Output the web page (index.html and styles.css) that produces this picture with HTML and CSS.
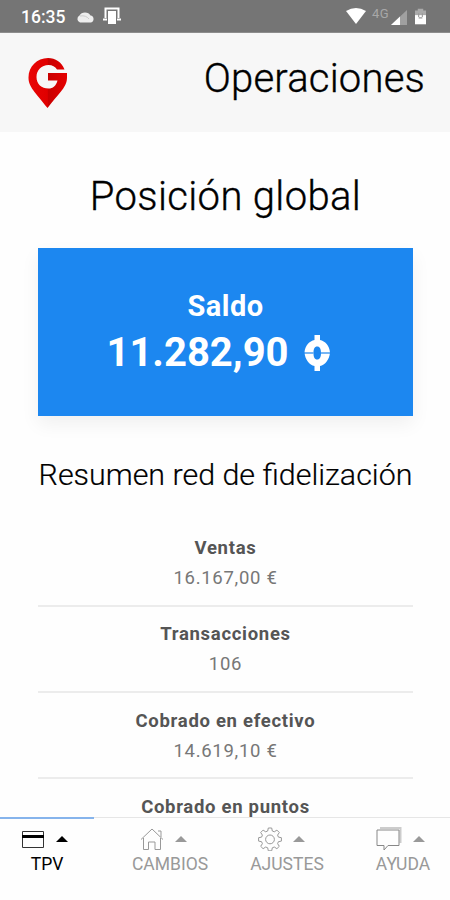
FILE: index.html
```html
<!DOCTYPE html>
<html lang="es">
<head>
<meta charset="utf-8">
<title>Operaciones</title>
<link rel="stylesheet" href="styles.css">
</head>
<body>
<div class="app">
  <div class="status">
    <span class="clock">16:35</span>
    <svg class="cloud" width="19" height="12" viewBox="0 0 19 12"><path d="M4 11.500A3.800 3.800 0 0 1 3.500 4.500 6 5 0 0 1 14.500 4.500 3.600 3.600 0 0 1 15 11.500Z" fill="#eee"/><path d="M4 5q6-1 9 3" stroke="#ccc" fill="none"/></svg>
    <svg class="cast" width="20" height="18" viewBox="0 0 20 18"><path d="M3.500 11V1.500h13V11M1 12.500h4M15 12.500h4" fill="none" stroke="#fff" stroke-width="2"/><path d="M6 4h8v13H6z" fill="#fff"/></svg>
    <svg class="wifi" width="20" height="16" viewBox="0 0 20 16"><path d="M0 3Q10-3 20 3L10 16Z" fill="#fff"/></svg>
    <span class="net">4G</span>
    <svg class="signal" width="16" height="15" viewBox="0 0 16 15"><path d="M0 15 16 0V15Z" fill="#a0a0a0"/><path d="M0 15 9 6.500V15Z" fill="#fff"/></svg>
    <svg class="battery" width="11" height="17" viewBox="0 0 12 17"><path d="M3 0h6v2h3v6H0V2h3z" fill="#aaa"/><path d="M0 7h12v10H0z" fill="#fff"/><path d="M4 5v4M8 5v4M4 10h4" stroke="#999" stroke-width="1.200"/></svg>
  </div>
  <header class="header">
    <svg class="logo" width="40" height="51" viewBox="0 0 40 51">
      <defs><linearGradient id="pin" x1="0" x2="1" y1="0" y2="0"><stop offset="0" stop-color="#e90505"/><stop offset=".49" stop-color="#e00000"/><stop offset=".51" stop-color="#c80000"/><stop offset="1" stop-color="#e60000"/></linearGradient></defs>
      <path d="M36.500 11.500C33.500 4 27.500 0 20 0 9 0 .5 8.500.5 19.500.5 29 7 34 19.500 50 32 34 39 29 39 19.500V15H20v7.500h9.500C28 28 25 30.500 20.500 30.500 13.500 30.500 8.500 26 8.500 19S13.500 7 20.500 7c4 0 6.500 1.500 8.500 4.500Z" fill="url(#pin)"/>
    </svg>
    <h1 class="title">Operaciones</h1>
  </header>
  <main class="content">
    <h2 class="heading">Posición global</h2>
    <section class="balance">
      <div class="balance-label">Saldo</div>
      <div class="balance-value"><span class="amount">11.282,90</span>
        <svg class="coin" width="28" height="36" viewBox="0 0 28 36"><path fill-rule="evenodd" d="M11.500 0h5.500v5C22 6 26.500 10.500 27 17.500 26.500 24.500 22 30 17 31v5h-5.500v-5C6.500 30 2 24.500 1.500 17.500 2 10.500 6.500 6 11.500 5ZM14.200 11.500C11.500 11.500 10.500 14 10.500 18s1 6.500 3.700 6.500 3.800-2.500 3.800-6.500-1.100-6.500-3.800-6.500Z" fill="#fff"/><path d="M0 18h10.500M18 18H28" stroke="#1c87f0" stroke-width="1.300" opacity=".8"/></svg>
      </div>
    </section>
    <h3 class="subheading">Resumen red de fidelización</h3>
    <dl class="summary">
      <div class="row"><dt>Ventas</dt><dd>16.167,00 €</dd></div>
      <div class="row"><dt>Transacciones</dt><dd>106</dd></div>
      <div class="row"><dt>Cobrado en efectivo</dt><dd>14.619,10 €</dd></div>
      <div class="row row-last"><dt>Cobrado en puntos</dt></div>
    </dl>
  </main>
  <nav class="tabs">
    <a class="tab active">
      <span class="icons"><svg width="24" height="24" viewBox="0 0 24 24"><path d="M1.500 4.500h21v16h-21z" fill="none" stroke="#333"/><path d="M1 9.500h22" stroke="#000" stroke-width="3"/></svg><i class="caret"></i></span>
      <span class="label">TPV</span>
    </a>
    <a class="tab tab-changes">
      <span class="icons"><svg width="24" height="24" viewBox="0 0 24 24"><path d="M1 12.500 12 2l11 10.500M3.500 11v11.500h5V15h6.500v7.500h5.500V11M18 4h3v6" fill="none" stroke="#999"/></svg><i class="caret"></i></span>
      <span class="label">CAMBIOS</span>
    </a>
    <a class="tab tab-settings">
      <span class="icons"><svg width="24" height="24" viewBox="0 0 24 24"><path d="M9.700 4 10.300 1h3.400l.6 3 2 .8 2.600-1.700 2.400 2.400-1.700 2.600.8 2 3 .6v3.400l-3 .6-.8 2 1.700 2.600-2.400 2.400-2.600-1.700-2 .8-.6 3h-3.400l-.6-3-2-.8-2.600 1.700-2.400-2.400 1.700-2.600-.8-2-3-.6v-3.400l3-.6.800-2-1.700-2.600 2.400-2.400 2.600 1.700Z" fill="none" stroke="#999" stroke-linejoin="round"/><circle cx="12" cy="12.400" r="4.400" fill="none" stroke="#999"/></svg><i class="caret"></i></span>
      <span class="label">AJUSTES</span>
    </a>
    <a class="tab tab-help">
      <span class="icons"><svg width="26" height="24" viewBox="0 0 26 24"><path d="M4 1h20.500v15" fill="none" stroke="#ccc" stroke-width="2"/><path d="M1 3h22v15.500H12L8 23v-4.500H1Z" fill="none" stroke="#888"/></svg><i class="caret"></i></span>
      <span class="label">AYUDA</span>
    </a>
  </nav>
</div>
</body>
</html>
```
FILE: styles.css
```css
* { box-sizing: border-box; }
body { margin: 0; font-family: Roboto, sans-serif; background: #fefefe; }
h1, h2, h3, dl, dt, dd { margin: 0; }
svg { display: block; flex: none; }
.app { width: 450px; height: 900px; display: flex; flex-direction: column; overflow: hidden; }
.status { height: 33px; flex: none; background: #757575; border-bottom: 1px solid #8d8d8d; display: flex; align-items: center; padding: 0 24px 0 21px; color: #fff; }
.clock { font-size: 17.500px; font-weight: 500; line-height: 32px; width: 55px; padding-top: 2px; }
.cloud { margin-top: 1px; }
.cast { margin-left: 7px; }
.wifi { margin-left: auto; }
.net { font-size: 13px; color: #a8a8a8; margin: -5px 0 0 6px; width: 19px; letter-spacing: .5px; }
.signal { margin-top: 2px; }
.battery { margin-left: 8px; }
.header { height: 99px; flex: none; background: #f7f7f7; display: flex; justify-content: space-between; padding: 25px 25px 0 28px; }
.title, .heading { -webkit-text-stroke: .35px #000; }
.title { font-weight: 300; font-size: 40px; line-height: 42px; color: #000; letter-spacing: .2px; }
.content { flex: 1; min-height: 0; overflow: hidden; padding: 0 37px 0 38px; text-align: center; }
.heading { font-weight: 300; font-size: 40px; line-height: 48px; margin-top: 41px; color: #000; letter-spacing: .35px; white-space: nowrap; }
.balance { height: 168px; margin-top: 27px; background: #1c87f0; color: #fff; font-weight: 700; box-shadow: 0 8px 18px rgba(0, 0, 0, .06); padding-top: 41px; }
.balance-label { font-size: 29px; line-height: 34px; letter-spacing: .5px; }
.balance-value { display: flex; justify-content: center; align-items: center; gap: 14px; font-size: 40px; line-height: 47px; padding: 6px 14px 0 0; }
.subheading { display: flex; justify-content: center; font-weight: 300; font-size: 30.400px; line-height: 36px; margin-top: 41px; color: #000; white-space: nowrap; -webkit-text-stroke: .2px #000; }
.summary { margin-top: 27.600px; }
.row { height: 86.200px; padding-top: 12.600px; border-bottom: 2px solid #ececec; font-size: 18.500px; line-height: 30px; letter-spacing: .7px; }
.row-last { height: auto; padding-top: 16.600px; line-height: 22px; border: 0; }
dt { font-weight: 700; color: #555; }
dd { color: #777; }
.tabs { height: 83px; flex: none; border-top: 1px solid #e6e6e6; display: flex; background: #fefefe; }
.tab { width: 94px; flex: none; display: flex; flex-direction: column; align-items: center; color: #999; padding-top: 8px; }
.active { color: #000; border-top: 2px solid #86b4ec; margin-top: -1px; padding-top: 7px; }
.tab-changes { width: 152px; }
.tab-settings { width: 82px; }
.tab-help { width: 122px; padding-left: 28px; }
.icons { display: flex; align-items: center; gap: 11px; height: 26px; margin-right: 6px; }
.tab-changes .icons { margin-right: 14px; }
.tab-settings .icons { margin-right: 11px; }
.caret { border: 6px solid transparent; border-top: 0; border-bottom-color: currentColor; }
.label { font-size: 17.500px; line-height: 22px; padding-top: 1px; }
```
